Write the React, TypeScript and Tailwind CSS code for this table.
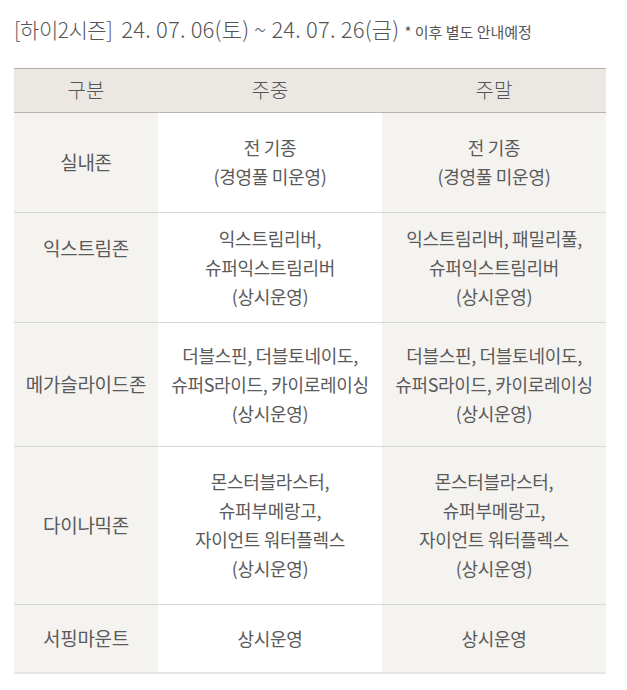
import React from "react";

const font = { fontFamily: '"Noto Sans CJK KR", "Noto Sans", sans-serif' };

type Row = { label: string; h: string; labelCls?: string; wd: string[]; we: string[] };

const rows: Row[] = [
  { label: "실내존", h: "h-[100px]", wd: ["전 기종", "(경영풀 미운영)"], we: ["전 기종", "(경영풀 미운영)"] },
  {
    label: "익스트림존",
    h: "h-[110px]",
    labelCls: "pb-[38px]",
    wd: ["익스트림리버,", "슈퍼익스트림리버", "(상시운영)"],
    we: ["익스트림리버, 패밀리풀,", "슈퍼익스트림리버", "(상시운영)"],
  },
  {
    label: "메가슬라이드존",
    h: "h-[124px]",
    wd: ["더블스핀, 더블토네이도,", "슈퍼S라이드, 카이로레이싱", "(상시운영)"],
    we: ["더블스핀, 더블토네이도,", "슈퍼S라이드, 카이로레이싱", "(상시운영)"],
  },
  {
    label: "다이나믹존",
    h: "h-[158px]",
    wd: ["몬스터블라스터,", "슈퍼부메랑고,", "자이언트 워터플렉스", "(상시운영)"],
    we: ["몬스터블라스터,", "슈퍼부메랑고,", "자이언트 워터플렉스", "(상시운영)"],
  },
  { label: "서핑마운트", h: "h-[69px]", wd: ["상시운영"], we: ["상시운영"] },
];

function Lines({ items }: { items: string[] }) {
  return (
    <div className="flex flex-col items-center">
      {items.map((t, i) => (
        <span key={i} className="whitespace-nowrap leading-[29px] tracking-[-0.3px]">
          {t}
        </span>
      ))}
    </div>
  );
}

export default function App() {
  return (
    <div className="w-[627px] h-[690px] bg-white text-[#5a5a5a]" style={font}>
      <div className="pl-[14px] pt-[12px] flex items-baseline whitespace-nowrap">
        <span className="text-[21px] font-light tracking-[-0.5px] text-[#555]">[하이2시즌]</span>
        <span className="ml-[9px] text-[22px] font-light tracking-[0.2px] text-[#555]">
          24. 07. 06(토) ~ 24. 07. 26(금)
        </span>
        <span className="ml-[5px] text-[15px] text-[#555] tracking-[0px]">* 이후 별도 안내예정</span>
      </div>

      <table className="ml-[14px] mt-[22px] w-[592px] border-collapse table-fixed">
        <colgroup>
          <col className="w-[144px]" />
          <col className="w-[224px]" />
          <col className="w-[224px]" />
        </colgroup>
        <thead>
          <tr className="h-[44px] bg-[#ebe7e3] border-t border-t-[#b4afaa] border-b border-b-[#b9b5b1]">
            <th className="font-light text-[20px] text-[#555]">구분</th>
            <th className="font-light text-[20px] text-[#555]">주중</th>
            <th className="font-light text-[20px] text-[#555]">주말</th>
          </tr>
        </thead>
        <tbody>
          {rows.map((r, i) => (
            <tr
              key={i}
              className={
                r.h +
                " border-b " +
                (i === rows.length - 1 ? "border-b-[#e6e6e6] border-b-2" : "border-b-[#d6d6d6]")
              }
            >
              <td
                className={
                  "bg-[#f5f3f0] text-center align-middle text-[19px] tracking-[-0.3px] whitespace-nowrap " +
                  (r.labelCls ?? "")
                }
              >
                {r.label}
              </td>
              <td className="bg-white text-center align-middle text-[18px]">
                <Lines items={r.wd} />
              </td>
              <td className="bg-[#f5f3f0] text-center align-middle text-[18px]">
                <Lines items={r.we} />
              </td>
            </tr>
          ))}
        </tbody>
      </table>
    </div>
  );
}
